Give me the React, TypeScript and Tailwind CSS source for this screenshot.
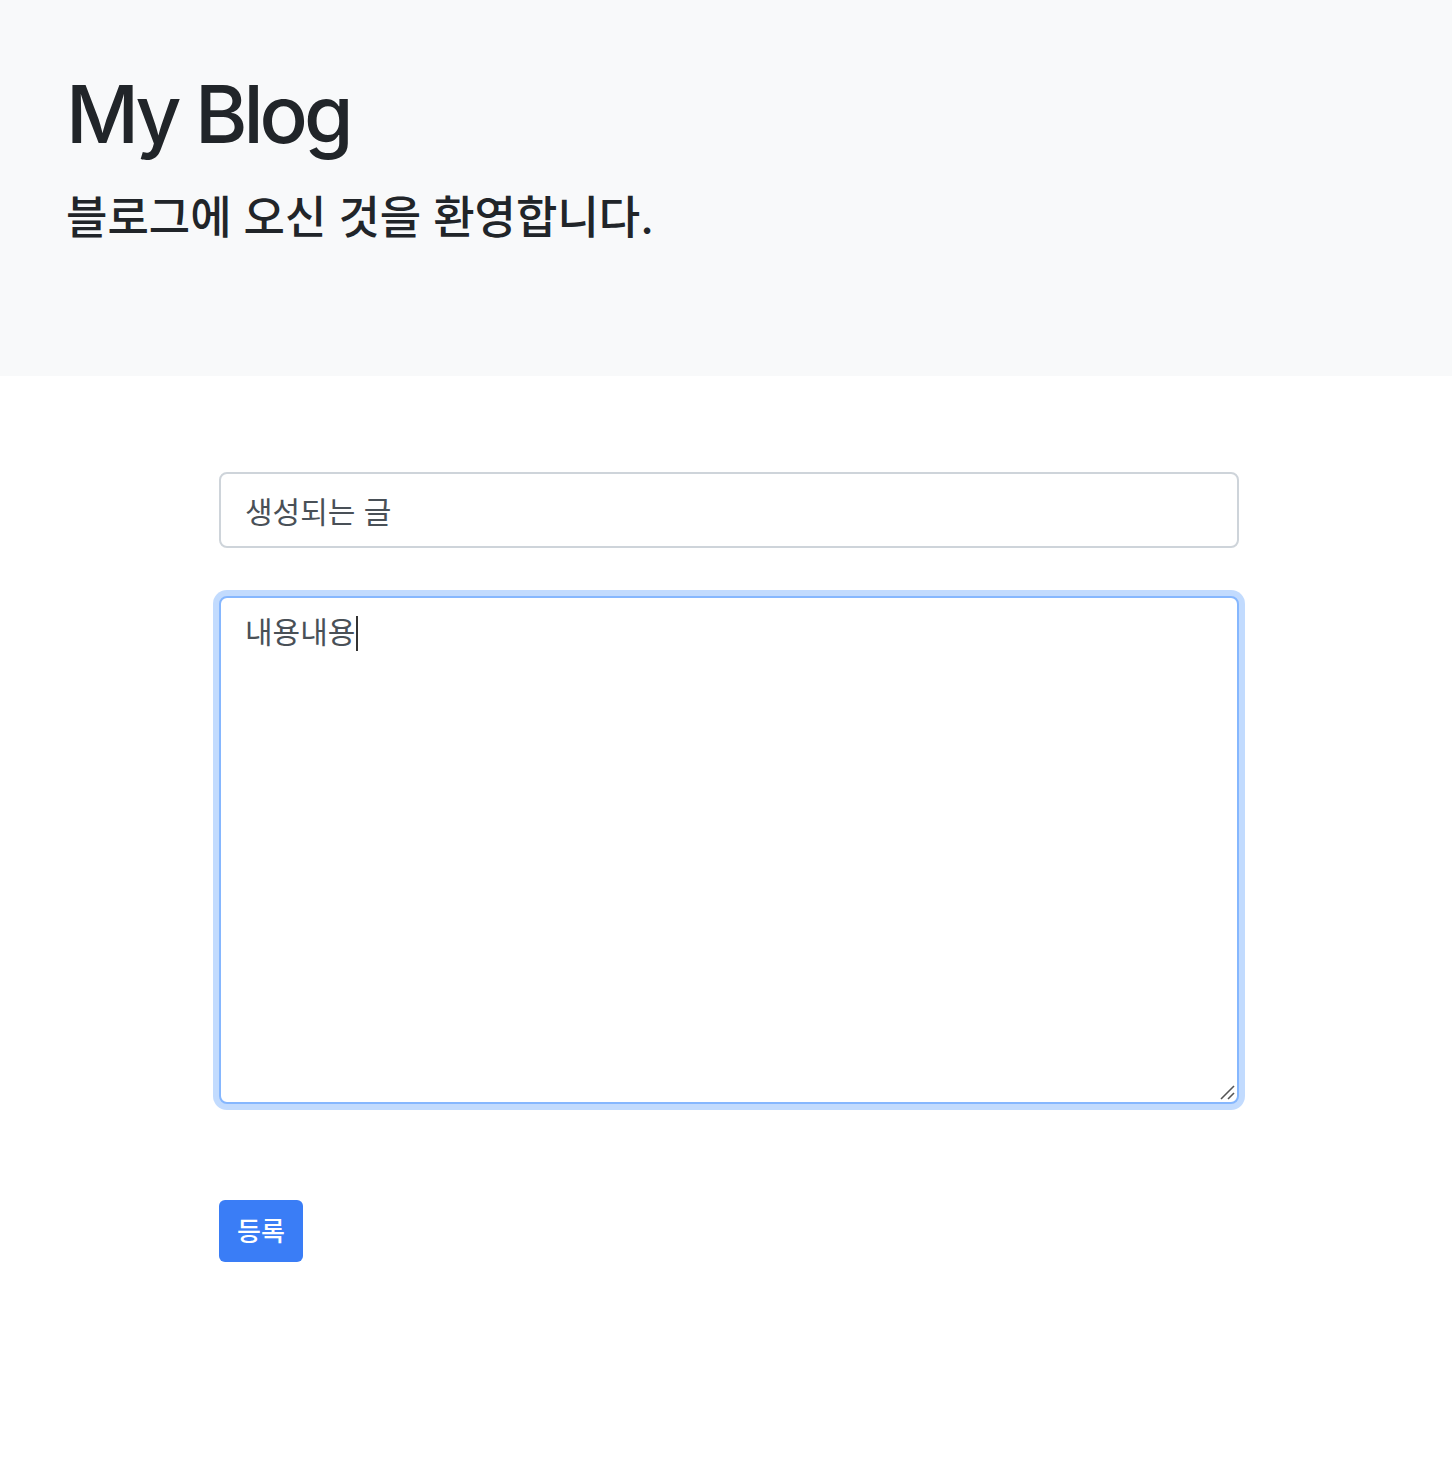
import React from "react";

export default function App() {
  return (
    <div
      className="min-h-[1466px] bg-white text-[#212529]"
      style={{ fontFamily: '"Inter", "Noto Sans CJK KR", sans-serif' }}
    >
      <div className="h-[376px] bg-[#f8f9fa] px-[66px] pt-[66px]">
        <h1 className="text-[80px] font-medium leading-[1.2] tracking-[-0.05em]">My Blog</h1>
        <p className="mt-[29px] text-[45px] font-medium leading-[1.2]">블로그에 오신 것을 환영합니다.</p>
      </div>
      <div className="ml-[219px] w-[1020px] pt-[96px]">
        <input
          readOnly
          value="생성되는 글"
          className="block h-[76px] w-full rounded-[8px] border-2 border-[#ced4da] bg-white px-[24px] text-[30px] text-[#495057] outline-none"
        />
        <div className="relative mt-[48px]">
          <textarea
            defaultValue="내용내용"
            className="block h-[508px] w-full resize-none rounded-[8px] border-2 border-[#86b7fe] bg-white px-[24px] pt-[12px] text-[30px] leading-[1.5] text-[#495057] shadow-[0_0_0_6px_rgba(13,110,253,0.25)] outline-none"
          />
          <span className="pointer-events-none absolute left-[137px] top-[20px] h-[35px] w-[1.5px] bg-[#333]" />
          <svg
            className="pointer-events-none absolute bottom-[4px] right-[4px]"
            width="16"
            height="16"
            viewBox="0 0 16 16"
          >
            <line x1="2" y1="15" x2="15" y2="2" stroke="#555" strokeWidth="1.6" />
            <line x1="9" y1="15" x2="15" y2="9" stroke="#555" strokeWidth="1.6" />
          </svg>
        </div>
        <button className="mt-[96px] h-[62px] w-[84px] rounded-[6px] bg-[#3a7df6] text-[26px] font-medium text-white">
          등록
        </button>
      </div>
    </div>
  );
}
